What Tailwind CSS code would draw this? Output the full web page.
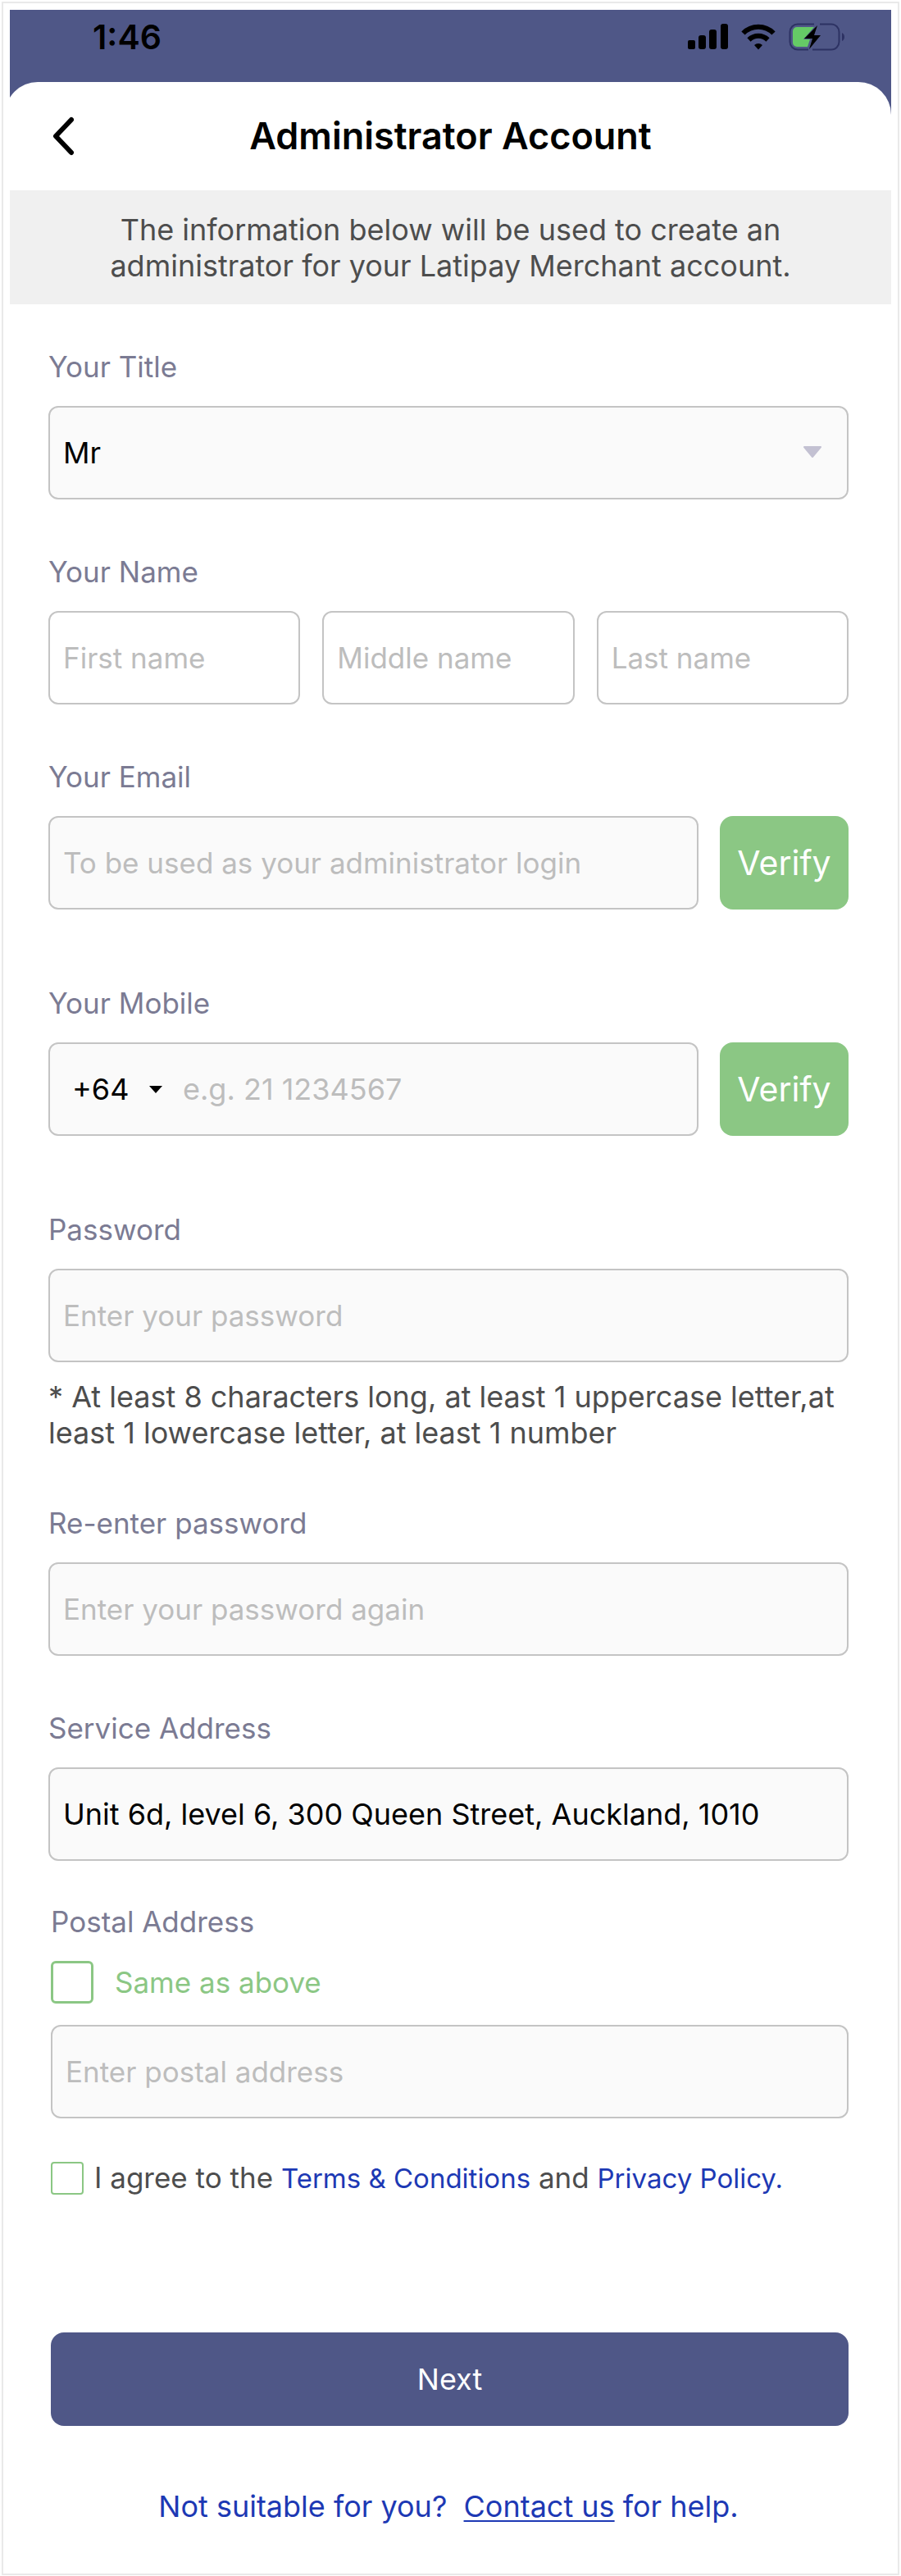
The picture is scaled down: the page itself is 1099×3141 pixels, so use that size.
<!DOCTYPE html>
<html lang="en">
<head>
    <meta charset="UTF-8">
    <meta name="viewport" content="width=device-width, initial-scale=1.0">
    <title>Administrator Account</title>
    <script src="https://cdn.jsdelivr.net/npm/@tailwindcss/browser@4"></script>
    <style>
        body {
            font-family: Inter, 'Liberation Sans', sans-serif;
        }
    </style>
</head>
<body class="bg-white p-[2px]">

<div class="border-2 border-[#e9e9e9] p-2 pb-[60px] text-[36px] leading-[44px] text-[#4d4d4d]">

    <!-- Status bar + header -->
    <header class="bg-[#4f5787] overflow-hidden">
        <div class="flex justify-between items-center h-[88px] pl-[101px] pr-[57px] pb-[22px]">
            <span class="text-[41px] font-semibold text-black">1:46</span>
            <div class="flex items-center gap-4">
                <svg class="w-[49px] h-[32px]" viewBox="0 0 49 32" fill="#000">
                    <rect x="0" y="20" width="9" height="11" rx="2"/>
                    <rect x="13" y="14" width="9" height="17" rx="3"/>
                    <rect x="26" y="7" width="9" height="24" rx="3"/>
                    <rect x="40" y="0" width="9" height="31" rx="3"/>
                </svg>
                <svg class="w-[42px] h-[32px]" viewBox="0 0 42 32" fill="none" stroke="#000" stroke-width="6">
                    <path d="M2.500 11.500a26 26 0 0 1 37 0"/>
                    <path d="M9.500 19.500a16.500 16.500 0 0 1 23 0"/>
                    <path d="M21 31.500l-5-5.500a7.500 7.500 0 0 1 10 0z" fill="#000" stroke="none"/>
                </svg>
                <svg class="w-[68px] h-[34px]" viewBox="0 0 68 34" fill="none">
                    <path d="M31 1.500H11a9.500 9.500 0 0 0-9.500 9.500v12a9.500 9.500 0 0 0 9.500 9.500h13" stroke="#2d3263" stroke-width="2"/>
                    <path d="M38 1.500h14a9.500 9.500 0 0 1 9.500 9.500v12a9.500 9.500 0 0 1-9.500 9.500H29" stroke="#2d3263" stroke-width="2"/>
                    <path d="M65 12v10q3-1.500 3-5t-3-5z" fill="#2d3263"/>
                    <path d="M31 5H10a5 5 0 0 0-5 5v14a5 5 0 0 0 5 5h13l3-9h-8z" fill="#65ca66"/>
                    <path d="M35 3L19 19h10l-4 13 14-17H31z" fill="#000"/>
                </svg>
            </div>
        </div>
        <div class="-ml-[6px] pl-[6px] rounded-t-[40px] bg-white">
            <div class="grid grid-cols-[52px_1fr_52px] items-center h-[132px] px-[40px]">
                <button type="button" aria-label="Back" class="flex items-center justify-center">
                    <svg class="w-[32px] h-[48px]" viewBox="0 0 32 48" fill="none" stroke="#000" stroke-width="6" stroke-linecap="round" stroke-linejoin="round">
                        <path d="M25 4L6 24l19 20"/>
                    </svg>
                </button>
                <h1 class="text-center text-[45px] font-semibold text-black">Administrator Account</h1>
            </div>
        </div>
    </header>

    <!-- Notice -->
    <p class="flex items-center justify-center h-[139px] px-[100px] text-center bg-[#f0f0f0]">The information below will be used to create an administrator for your Latipay Merchant account.</p>

    <form class="pl-[47px] pr-[52px] pt-[54px]">

        <!-- Title -->
        <label for="title" class="block text-[35px] text-[#7b7b93] mb-[26px]">Your Title</label>
        <div class="relative mb-[66px]">
            <select id="title" class="appearance-none block w-full h-[114px] px-4 border-2 border-[#c4c4c4] rounded-xl bg-[#fafafa] text-black">
                <option>Mr</option>
            </select>
            <svg class="absolute right-[32px] top-[48px] w-[24px] h-[16px] pointer-events-none" viewBox="0 0 24 16" fill="#c3c1d2" stroke="#c3c1d2" stroke-width="2" stroke-linejoin="round">
                <path d="M2 2h20L12 14z"/>
            </svg>
        </div>

        <!-- Name -->
        <label for="first" class="block text-[35px] text-[#7b7b93] mb-[26px]">Your Name</label>
        <div class="grid grid-cols-3 gap-[27px] mb-[66px]">
            <input id="first" type="text" placeholder="First name" class="min-w-0 h-[114px] px-4 border-2 border-[#c4c4c4] rounded-xl text-[35px] placeholder:text-[#bdbdbd]">
            <input type="text" aria-label="Middle name" placeholder="Middle name" class="min-w-0 h-[114px] px-4 border-2 border-[#c4c4c4] rounded-xl text-[35px] placeholder:text-[#bdbdbd]">
            <input type="text" aria-label="Last name" placeholder="Last name" class="min-w-0 h-[114px] px-4 border-2 border-[#c4c4c4] rounded-xl text-[35px] placeholder:text-[#bdbdbd]">
        </div>

        <!-- Email -->
        <label for="email" class="block text-[35px] text-[#7b7b93] mb-[26px]">Your Email</label>
        <div class="flex gap-[26px] mb-[92px]">
            <input id="email" type="email" placeholder="To be used as your administrator login" class="flex-1 min-w-0 h-[114px] px-4 border-2 border-[#c4c4c4] rounded-xl bg-[#fafafa] text-[35px] placeholder:text-[#bdbdbd]">
            <button type="button" class="w-[157px] h-[114px] rounded-2xl bg-[#8bc784] text-white text-[41px]">Verify</button>
        </div>

        <!-- Mobile -->
        <label for="mobile" class="block text-[35px] text-[#7b7b93] mb-[26px]">Your Mobile</label>
        <div class="flex gap-[26px] mb-[92px]">
            <div class="flex-1 min-w-0 flex items-center h-[114px] border-2 border-[#c4c4c4] rounded-xl bg-[#fafafa]">
                <div class="relative">
                    <select aria-label="Country code" class="appearance-none block w-[162px] pl-[27px] text-black">
                        <option>+64</option>
                    </select>
                    <svg class="absolute right-[25px] top-[18px] w-[16px] h-[9px] pointer-events-none" viewBox="0 0 16 9" fill="#000">
                        <path d="M0 0h16L8 9z"/>
                    </svg>
                </div>
                <input id="mobile" type="tel" placeholder="e.g. 21 1234567" class="flex-1 min-w-0 h-full rounded-xl placeholder:text-[#bdbdbd]">
            </div>
            <button type="button" class="w-[157px] h-[114px] rounded-2xl bg-[#8bc784] text-white text-[41px]">Verify</button>
        </div>

        <!-- Password -->
        <label for="password" class="block text-[35px] text-[#7b7b93] mb-[26px]">Password</label>
        <input id="password" type="password" placeholder="Enter your password" class="block w-full h-[114px] px-4 border-2 border-[#c4c4c4] rounded-xl bg-[#fafafa] text-[35px] placeholder:text-[#bdbdbd]">
        <p class="mt-[20px] mb-[66px]">* At least 8 characters long, at least 1 uppercase letter,at least 1 lowercase letter, at least 1 number</p>

        <label for="password2" class="block text-[35px] text-[#7b7b93] mb-[26px]">Re-enter password</label>
        <input id="password2" type="password" placeholder="Enter your password again" class="block w-full h-[114px] px-4 mb-[66px] border-2 border-[#c4c4c4] rounded-xl bg-[#fafafa] text-[35px] placeholder:text-[#bdbdbd]">

        <!-- Addresses -->
        <label for="service" class="block text-[35px] text-[#7b7b93] mb-[26px]">Service Address</label>
        <input id="service" type="text" value="Unit 6d, level 6, 300 Queen Street, Auckland, 1010" class="block w-full h-[114px] px-4 mb-[52px] border-2 border-[#c4c4c4] rounded-xl bg-[#fafafa] text-black">

        <div class="pl-[3px]">
            <label for="postal" class="block text-[35px] text-[#7b7b93] mb-[26px]">Postal Address</label>
            <label class="flex items-center gap-[26px] mb-[26px] text-[35px] text-[#8bc784]">
                <input type="checkbox" class="appearance-none size-[52px] border-3 border-[#8bc784] rounded-md bg-white">
                Same as above
            </label>
            <input id="postal" type="text" placeholder="Enter postal address" class="block w-full h-[114px] px-4 border-2 border-[#c4c4c4] rounded-xl bg-[#fafafa] text-[35px] placeholder:text-[#bdbdbd]">

            <div class="flex items-center gap-[13px] mt-[50px] mb-[166px]">
                <input id="agree" type="checkbox" class="appearance-none size-[40px] border-2 border-[#8bc784] rounded-sm bg-white">
                <label for="agree" class="text-[35px]">I agree to the <a href="#" class="text-[33px] text-[#1d39b4]">Terms &amp; Conditions</a> and <a href="#" class="text-[33px] text-[#1d39b4]">Privacy Policy.</a></label>
            </div>

            <button type="submit" class="block w-full h-[114px] rounded-2xl bg-[#4f5787] text-white">Next</button>
        </div>

        <p class="mt-[76px] text-center text-[#1d39b4]">Not suitable for you?&nbsp; <a href="#" class="underline underline-offset-4 decoration-2">Contact us</a> for help.</p>
    </form>

</div>

</body>
</html>
